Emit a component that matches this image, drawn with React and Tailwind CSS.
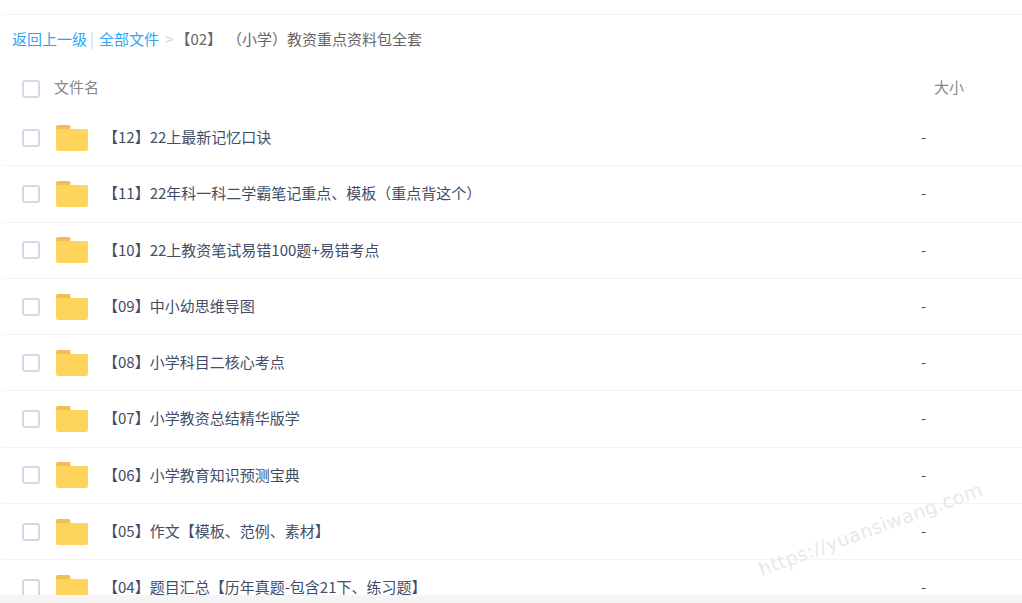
import React from "react";

const files = [
  "【12】22上最新记忆口诀",
  "【11】22年科一科二学霸笔记重点、模板（重点背这个）",
  "【10】22上教资笔试易错100题+易错考点",
  "【09】中小幼思维导图",
  "【08】小学科目二核心考点",
  "【07】小学教资总结精华版学",
  "【06】小学教育知识预测宝典",
  "【05】作文【模板、范例、素材】",
  "【04】题目汇总【历年真题-包含21下、练习题】",
];

const Checkbox = () => (
  <span className="block w-[18px] h-[18px] shrink-0 bg-white border-2 border-[#d3d9e6] rounded-[3px]" />
);

const FolderIcon = () => (
  <svg width="32" height="26" viewBox="0 0 32 26" className="block shrink-0">
    <path d="M0 2a2 2 0 0 1 2-2h10.500a2 2 0 0 1 2 2v4H0z" fill="#ecc153" />
    <path d="M0 5.500a1.500 1.500 0 0 1 1.500-1.500H30.500a1.500 1.500 0 0 1 1.500 1.500V24a2 2 0 0 1-2 2H2a2 2 0 0 1-2-2z" fill="#ffd45c" />
  </svg>
);

const FileRow = ({ name }) => (
  <div className="flex items-center h-[56.25px] ml-[2px] border-b first:border-t border-[#f3f4f8] overflow-hidden">
    <div className="w-[54px] pl-[20px] shrink-0">
      <Checkbox />
    </div>
    <div className="w-[47px] shrink-0">
      <FolderIcon />
    </div>
    <div className="flex-1 text-[15px] leading-5 text-[#424e67] -mt-[1.4px]">{name}</div>
    <div className="w-[101px] shrink-0 text-[15px] leading-5 text-[#424e67] -mt-[1.4px]">-</div>
  </div>
);

export default function App() {
  return (
    <div
      className="relative h-[603px] flex flex-col overflow-hidden bg-white"
      style={{ fontFamily: '"Noto Sans CJK SC", sans-serif' }}
    >
      <div className="h-[15px] shrink-0 border-b border-[#f3f4f6] ml-[2px]" />

      <div className="flex-1 min-h-0 overflow-hidden">
        {/* Breadcrumb */}
        <div className="flex items-center h-[50px] pl-3 pb-[2px] text-[15px] leading-5 whitespace-pre">
          <span className="text-[#2ba6f5]">返回上一级</span>
          <span className="text-[#c9d6ea] ml-[3px] mr-[5px]">|</span>
          <span className="text-[#2ba6f5]">全部文件</span>
          <span className="text-[#c9d6ea] ml-[6px] mr-[2px]">&gt;</span>
          <span className="text-[#666666]">【02】</span>
          <span className="text-[#666666] ml-[5px]">（小学）教资重点资料包全套</span>
        </div>

        {/* Header */}
        <div className="flex items-center h-[45.15px] pt-[3px] ml-[2px] text-[15px] leading-5 text-[#888888]">
          <div className="w-[52px] pl-[20px] shrink-0">
            <Checkbox />
          </div>
          <div className="flex-1 -mt-[4px]">文件名</div>
          <div className="w-[88px] shrink-0 -mt-[4px]">大小</div>
        </div>

        {files.map((name) => (
          <FileRow key={name} name={name} />
        ))}
      </div>

      <div className="h-2 shrink-0 bg-[#f5f5f6]" />

      {/* Watermark */}
      <div
        className="absolute left-[752px] top-[515px] -rotate-[20deg] text-[19px] tracking-[0.4px] text-[#e8e8ea] whitespace-nowrap pointer-events-none"
        style={{ fontFamily: '"DejaVu Sans", sans-serif' }}
      >
        https://yuansiwang.com
      </div>
    </div>
  );
}
